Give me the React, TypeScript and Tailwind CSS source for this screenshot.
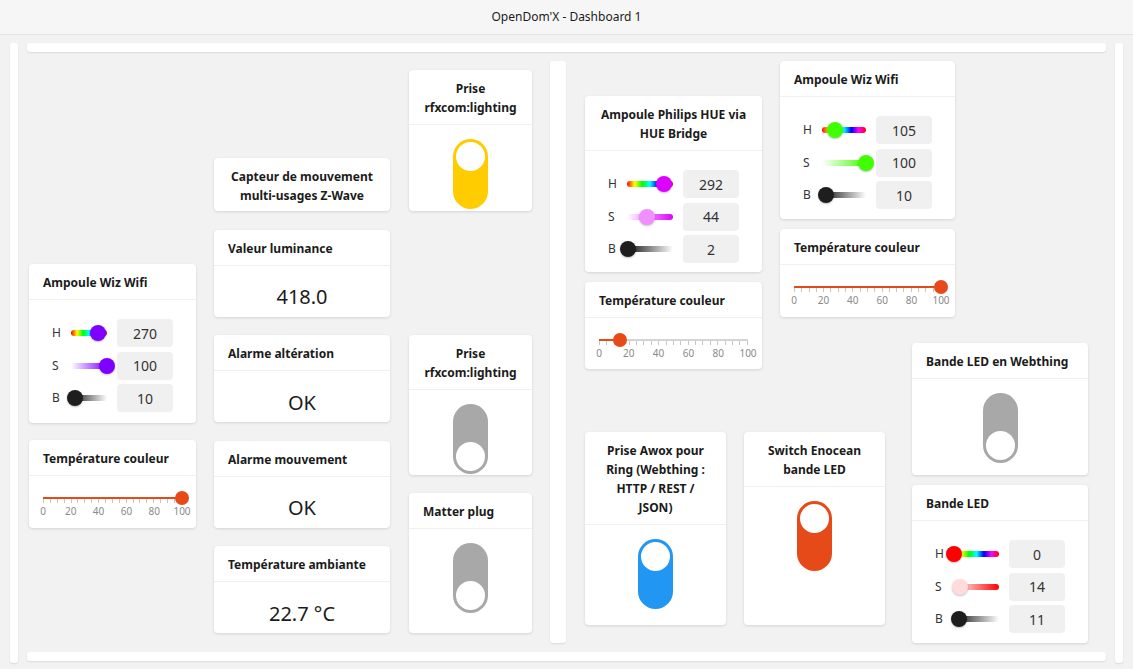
import React from "react";

type CardProps = {
  title: React.ReactNode;
  center?: boolean;
  className?: string;
  children?: React.ReactNode;
};

function Card({ title, center = false, className = "", children }: CardProps) {
  return (
    <div className={`bg-white rounded-[4px] shadow-[0_1px_3px_rgba(0,0,0,0.13)] flex flex-col shrink-0 overflow-hidden ${className}`}>
      <div
        className={`px-[14px] pt-[9px] pb-[7px] text-[12px] leading-[19px] font-bold whitespace-nowrap text-[#1b1b1b] ${center ? "text-center" : ""} ${children ? "border-b border-[#f0f0f0]" : ""}`}
      >
        {title}
      </div>
      {children}
    </div>
  );
}

const RAINBOW = "linear-gradient(to right, #f00, #ff0, #0f0, #0ff, #00f, #f0f, #f00)";

function SliderRow({ label, value, pct, track, thumb }: { label: string; value: number; pct: number; track: string; thumb: string }) {
  return (
    <div className="flex items-center">
      <span className="w-[19px] shrink-0 text-[12px] text-[#333]">{label}</span>
      <div className="relative flex-1 h-[16px] flex items-center">
        <div className="h-[6px] w-full rounded-full" style={{ background: track }} />
        <div
          className="absolute top-0 w-[16px] h-[16px] rounded-full shadow-[0_1px_2px_rgba(0,0,0,0.25)]"
          style={{ left: `calc(${pct}% - 8px)`, background: thumb }}
        />
      </div>
      <div className="ml-[10px] w-[56px] h-[28px] shrink-0 rounded-[4px] bg-[#f0f0f0] flex items-center justify-center text-[14px] text-[#333]">
        {value}
      </div>
    </div>
  );
}

function HsbCard({ title, center, h, s, b, className }: { title: React.ReactNode; center?: boolean; h: number; s: number; b: number; className: string }) {
  const hue = `hsl(${h}, 100%, 50%)`;
  return (
    <Card title={title} center={center} className={className}>
      <div className="px-[23px] pt-[19px] pb-[10px] flex flex-col gap-[4.5px]">
        <SliderRow label="H" value={h} pct={(h / 360) * 100} track={RAINBOW} thumb={hue} />
        <SliderRow
          label="S"
          value={s}
          pct={s}
          track={`linear-gradient(to right, rgba(255,255,255,0), ${hue})`}
          thumb={`hsl(${h}, 100%, ${100 - s / 2}%)`}
        />
        <SliderRow label="B" value={b} pct={b} track="linear-gradient(to right, #111, rgba(0,0,0,0))" thumb="#1e1e1e" />
      </div>
    </Card>
  );
}

function TempCard({ value, className }: { value: number; className: string }) {
  const ticks = Array.from({ length: 21 }, (_, i) => i);
  const labels = [0, 20, 40, 60, 80, 100];
  return (
    <Card title="Température couleur" className={className}>
      <div className="px-[14px] pt-[21px]">
        <div className="relative h-[2px] bg-[#d4d4d4]">
          <div className="absolute left-0 top-0 h-[2px] bg-[#e64a19]" style={{ width: `${value}%` }} />
          <div
            className="absolute top-[-6px] z-10 w-[14px] h-[14px] rounded-full bg-[#e64a19]"
            style={{ left: `calc(${value}% - 7px)` }}
          />
        </div>
        <div className="flex justify-between h-[4px]">
          {ticks.map((t) => (
            <div key={t} className="w-px h-[4px] bg-[#c6c6c6]" />
          ))}
        </div>
        <div className="relative h-[14px] mt-[1px]">
          {labels.map((l) => (
            <span
              key={l}
              className="absolute top-0 -translate-x-1/2 text-[10px] leading-[14px] text-[#8a8a8a]"
              style={{ left: `${l}%` }}
            >
              {l}
            </span>
          ))}
        </div>
      </div>
    </Card>
  );
}

function ValueCard({ title, value }: { title: string; value: string }) {
  return (
    <Card title={title} className="h-[87px]">
      <div className="flex-1 flex items-center justify-center pt-[12px] text-[20px] text-[#1b1b1b]">{value}</div>
    </Card>
  );
}

function Toggle({ on, color }: { on: boolean; color: string }) {
  return (
    <div className={`w-[35px] h-[70px] rounded-full p-[3px] flex flex-col ${on ? `justify-start ${color}` : "justify-end bg-[#a8a8a8]"}`}>
      <div className="w-[29px] h-[29px] rounded-full bg-white" />
    </div>
  );
}

function ToggleCard({ title, on, color = "", center = true, className }: { title: React.ReactNode; on: boolean; color?: string; center?: boolean; className: string }) {
  return (
    <Card title={title} center={center} className={className}>
      <div className="flex justify-center pt-[14px]">
        <Toggle on={on} color={color} />
      </div>
    </Card>
  );
}

const bar = "bg-white rounded-[3px] shadow-[0_1px_2px_rgba(0,0,0,0.1)]";

export default function App() {
  return (
    <div className="h-screen w-full flex flex-col bg-[#f2f2f2] font-['Noto_Sans',sans-serif] overflow-hidden">
      <div className="h-[35px] shrink-0 bg-[#f6f6f6] border-b border-[#e2e2e2] flex items-center justify-center text-[12px] text-[#1b1b1b]">
        OpenDom'X - Dashboard 1
      </div>
      <div className="flex-1 flex px-[10px] pt-[8px] pb-[6px] gap-[9px]">
        <div className={`w-[8px] ${bar}`} />
        <div className="flex-1 flex flex-col">
          <div className={`h-[9px] ${bar}`} />
          <div className="h-[600px] flex items-start">
            {/* column A */}
            <div className="ml-[2px] w-[167px] pt-[212px] flex flex-col gap-[17px] shrink-0">
              <HsbCard title="Ampoule Wiz Wifi" h={270} s={100} b={10} className="h-[159px]" />
              <TempCard value={100} className="h-[88px]" />
            </div>
            {/* column B */}
            <div className="ml-[18px] w-[176px] pt-[106px] flex flex-col gap-[18.5px] shrink-0">
              <Card title={<>Capteur de mouvement<br />multi-usages Z-Wave</>} center className="h-[53px]" />
              <ValueCard title="Valeur luminance" value="418.0" />
              <ValueCard title="Alarme altération" value="OK" />
              <ValueCard title="Alarme mouvement" value="OK" />
              <ValueCard title="Température ambiante" value="22.7 °C" />
            </div>
            {/* column C */}
            <div className="ml-[19px] w-[123px] pt-[18px] flex flex-col shrink-0">
              <ToggleCard title={<>Prise<br />rfxcom:lighting</>} on color="bg-[#ffcc00]" className="h-[141px]" />
              <ToggleCard title={<>Prise<br />rfxcom:lighting</>} on={false} className="h-[140px] mt-[124px]" />
              <ToggleCard title="Matter plug" center={false} on={false} className="h-[140px] mt-[18px]" />
            </div>
            {/* separator */}
            <div className={`ml-[18px] mt-[9px] w-[16px] h-[582px] shrink-0 ${bar}`} />
            {/* right section */}
            <div className="ml-[19px] flex items-start">
              <div className="flex flex-col">
                <div className="flex items-start">
                  <div className="w-[177px] pt-[44px] flex flex-col gap-[10px]">
                    <HsbCard title={<>Ampoule Philips HUE via<br />HUE Bridge</>} center h={292} s={44} b={2} className="h-[176px]" />
                    <TempCard value={14} className="h-[87px]" />
                  </div>
                  <div className="ml-[18px] w-[175px] pt-[9px] flex flex-col gap-[10px]">
                    <HsbCard title="Ampoule Wiz Wifi" h={105} s={100} b={10} className="h-[158px]" />
                    <TempCard value={100} className="h-[88px]" />
                  </div>
                </div>
                <div className="mt-[63px] flex items-start">
                  <ToggleCard
                    title={<>Prise Awox pour<br />Ring (Webthing :<br />HTTP / REST /<br />JSON)</>}
                    on
                    color="bg-[#2196f3]"
                    className="w-[141px] h-[193px]"
                  />
                  <ToggleCard
                    title={<>Switch Enocean<br />bande LED</>}
                    on
                    color="bg-[#e64a19]"
                    className="ml-[18px] w-[141px] h-[193px]"
                  />
                </div>
              </div>
              <div className="-ml-[43px] w-[176px] pt-[291px] flex flex-col gap-[10px] shrink-0">
                <ToggleCard title="Bande LED en Webthing" center={false} on={false} className="h-[132px]" />
                <HsbCard title="Bande LED" h={0} s={14} b={11} className="h-[158px]" />
              </div>
            </div>
          </div>
          <div className={`h-[9px] ${bar}`} />
        </div>
        <div className={`w-[8px] ${bar}`} />
      </div>
    </div>
  );
}
